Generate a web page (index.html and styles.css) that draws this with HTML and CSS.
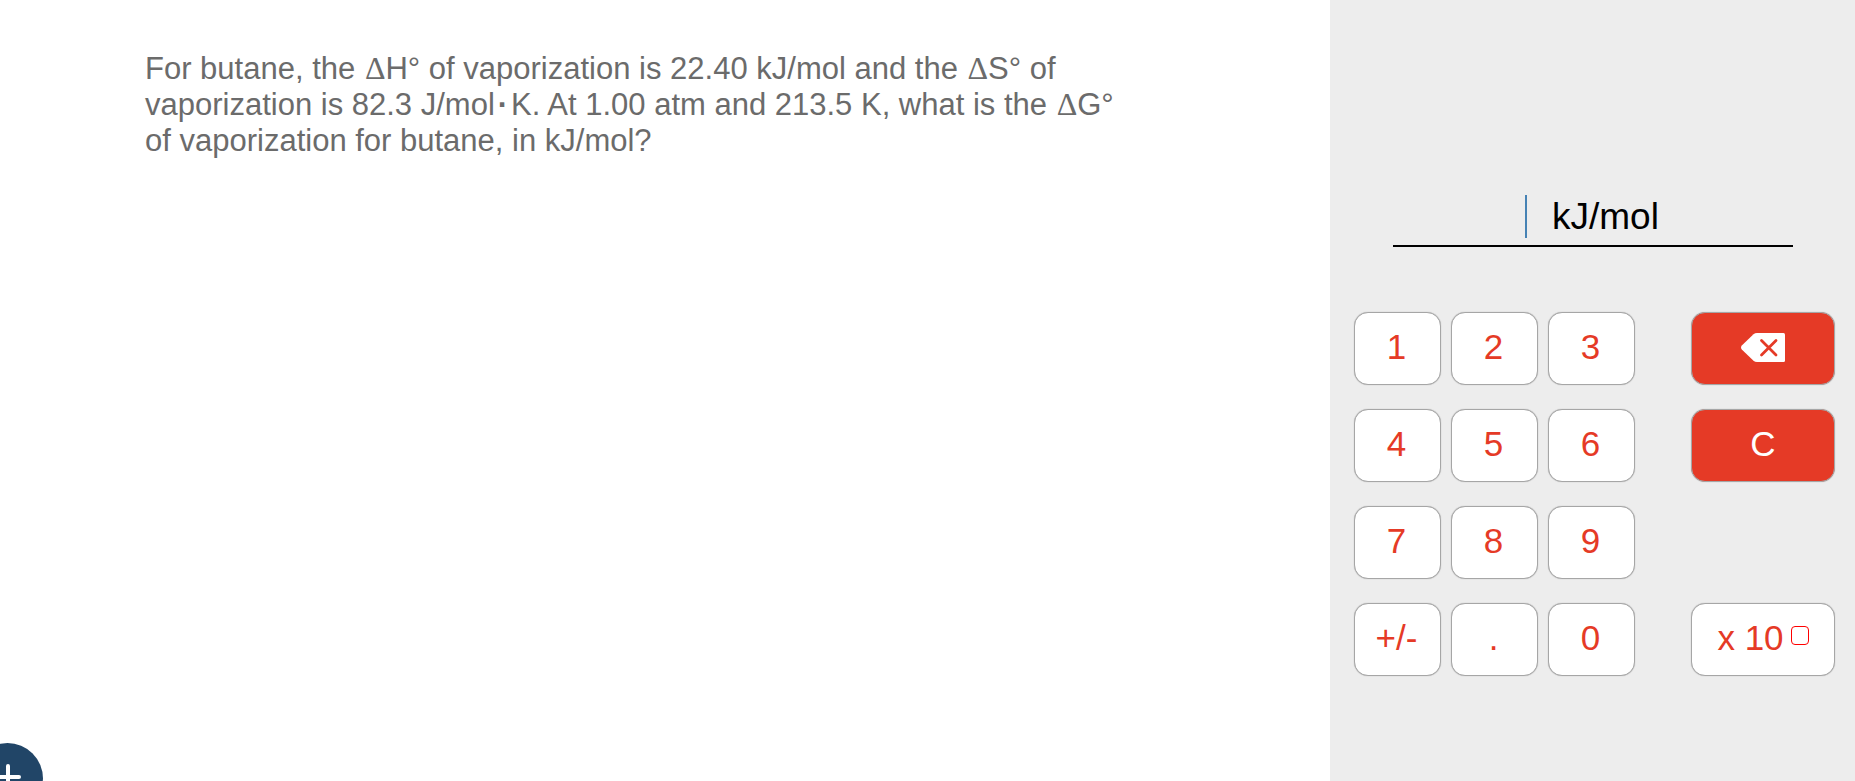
FILE: index.html
```html
<!DOCTYPE html>
<html lang="en">
<head>
<meta charset="utf-8">
<title>Gibbs free energy of vaporization</title>
<link rel="stylesheet" href="styles.css">
</head>
<body>
<div class="layout">
  <main class="question">
    <p class="prompt">For butane, the <span class="delta">Δ</span>H° of vaporization is 22.40 kJ/mol and the <span class="delta">Δ</span>S° of vaporization is 82.3 J/mol<span class="dot">·</span>K. At 1.00 atm and 213.5 K, what is the <span class="delta">Δ</span>G° of vaporization for butane, in kJ/mol?</p>
  </main>
  <aside class="panel">
    <div class="answer">
      <input class="answer-input" id="answer" type="text" inputmode="none" autocomplete="off">
      <span class="caret"></span>
      <label class="unit" for="answer">kJ/mol</label>
    </div>
    <div class="keypad">
      <div class="keys">
        <button class="key" type="button">1</button>
        <button class="key" type="button">2</button>
        <button class="key" type="button">3</button>
        <button class="key" type="button">4</button>
        <button class="key" type="button">5</button>
        <button class="key" type="button">6</button>
        <button class="key" type="button">7</button>
        <button class="key" type="button">8</button>
        <button class="key" type="button">9</button>
        <button class="key" type="button">+/-</button>
        <button class="key" type="button">.</button>
        <button class="key" type="button">0</button>
      </div>
      <div class="actions">
        <button class="key key-red" type="button" aria-label="Backspace">
          <svg class="backspace" viewBox="0 0 44 29" aria-hidden="true">
            <path fill="#fff" d="M16 0H42.500Q44 0 44 1.500V27.500Q44 29 42.500 29H16Q14 29 12.500 27.700L.8 16.500Q-.8 14.500 .8 12.500L12.500 1.300Q14 0 16 0Z"/>
            <path fill="none" stroke="#e53a26" stroke-width="2.800" stroke-linecap="round" d="M20.500 7.500L35 22M35 7.500L20.500 22"/>
          </svg>
        </button>
        <button class="key key-red" type="button">C</button>
        <button class="key key-power" type="button">x 10<span class="exponent"></span></button>
      </div>
    </div>
  </aside>
</div>
<button class="add" type="button" aria-label="Add">
  <svg class="plus" viewBox="0 0 28 28" aria-hidden="true">
    <path fill="none" stroke="#fff" stroke-width="4" stroke-linecap="round" d="M14 3V25M3 14H25"/>
  </svg>
</button>
</body>
</html>
```
FILE: styles.css
```css
* {
  box-sizing: border-box;
}

body {
  margin: 0;
  overflow: hidden;
  background: #fff;
  font-family: "Liberation Sans", Arial, sans-serif;
}

.layout {
  display: grid;
  grid-template-columns: 1fr 525px;
  min-height: 100vh;
}

.question {
  padding: 51px 200px 50px 145px;
}

.prompt {
  margin: 0;
  color: #6b6b6b;
  font-size: 31px;
  line-height: 36px;
}

.delta {
  margin: 0 0 0 1px;
  font-family: "Liberation Serif", "Times New Roman", serif;
  font-size: 32px;
  line-height: 1;
}

.dot {
  margin: 0 3px;
  font-weight: bold;
}

.panel {
  padding: 192px 20px 40px 24px;
  background: #ededed;
}

.answer {
  display: flex;
  align-items: center;
  height: 55px;
  margin: 0 42px 65px 39px;
  padding-bottom: 4px;
  border-bottom: 2px solid #000;
}

.answer-input {
  width: 132px;
  height: 43px;
  padding: 0;
  border: 0;
  outline: 0;
  background: transparent;
  color: #000;
  font: inherit;
  font-size: 37px;
  text-align: right;
}

.caret {
  width: 2px;
  height: 43px;
  background: steelblue;
}

.unit {
  margin-left: 25px;
  font-size: 37px;
  line-height: 43px;
}

.keypad {
  display: flex;
  justify-content: space-between;
}

.keys {
  display: grid;
  grid-template-columns: repeat(3, 87px);
  grid-template-rows: repeat(4, 73px);
  gap: 24px 10px;
}

.actions {
  display: grid;
  grid-template-columns: 144px;
  grid-template-rows: repeat(4, 73px);
  row-gap: 24px;
}

.key {
  display: flex;
  align-items: center;
  justify-content: center;
  padding: 0 2px 3px 0;
  border: 1px solid #a6a6a6;
  border-radius: 14px;
  background: #fff;
  box-shadow: 0 0 1px #a6a6a6;
  color: #e53a26;
  font: inherit;
  font-size: 35px;
}

.key-red {
  padding-right: 0;
  background: #e53a26;
  color: #fff;
}

.key-power {
  grid-row: 4;
  padding-right: 0;
}

.exponent {
  width: 18px;
  height: 19px;
  margin: 0 0 5px 7px;
  border: 1px solid #f00;
  border-radius: 4px;
}

.backspace {
  width: 44px;
  height: 29px;
}

.add {
  position: fixed;
  bottom: -33px;
  left: -28px;
  display: flex;
  align-items: center;
  justify-content: center;
  width: 71px;
  height: 71px;
  padding: 0 0 3px;
  border: 0;
  border-radius: 50%;
  background: #214567;
}

.plus {
  width: 28px;
  height: 28px;
}
```
